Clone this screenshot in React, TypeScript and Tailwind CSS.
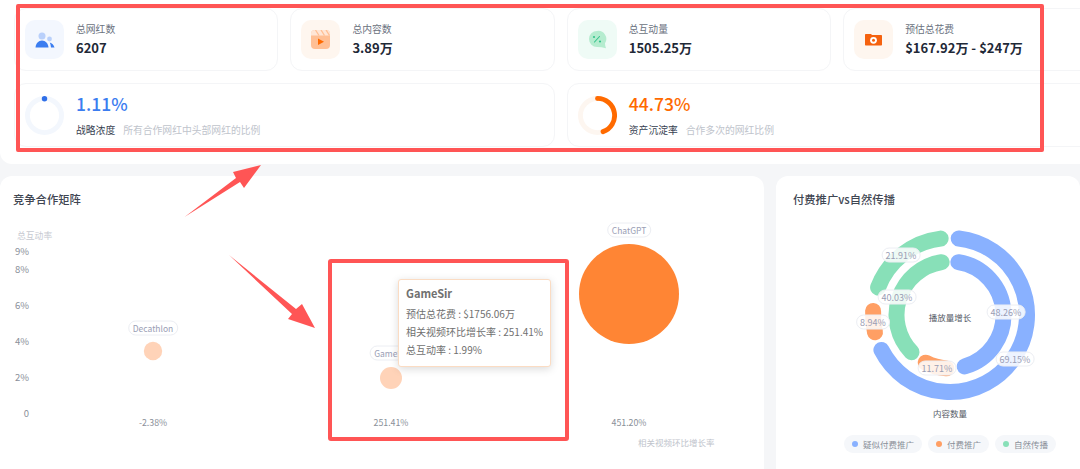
const font = { fontFamily: '"Noto Sans CJK SC", "Noto Sans", sans-serif' }

// clockwise from top, degrees
const arc = (cx: number, cy: number, r: number, from: number, to: number) => {
  const pt = (deg: number) => {
    const a = ((deg - 90) * Math.PI) / 180
    return `${(cx + r * Math.cos(a)).toFixed(2)} ${(cy + r * Math.sin(a)).toFixed(2)}`
  }
  return `M ${pt(from)} A ${r} ${r} 0 ${to - from > 180 ? 1 : 0} 1 ${pt(to)}`
}

const IconBox = ({ bg, children }: { bg: string; children: React.ReactNode }) => (
  <div className={`w-[39px] h-[39px] rounded-[10px] flex items-center justify-center shrink-0 ${bg}`}>{children}</div>
)

const StatCard = ({ icon, label, value }: { icon: React.ReactNode; label: string; value: string }) => (
  <div className="w-[264.400px] h-[63px] shrink-0 bg-white border border-[#f4f5f7] rounded-[12px] flex items-center pl-[10px] gap-[12px]">
    {icon}
    <div className="flex flex-col">
      <span className="text-[9.800px] leading-[14px] text-[#6b7280]">{label}</span>
      <span className="text-[13px] leading-[20px] mt-[2px] font-bold text-[#1f2937] whitespace-nowrap">{value}</span>
    </div>
  </div>
)

const RingCard = ({ ring, value, color, title, desc }: { ring: React.ReactNode; value: string; color: string; title: string; desc: string }) => (
  <div className="h-[64px] bg-white border border-[#f4f5f7] rounded-[12px] flex items-center pl-[10px] gap-[12px]">
    {ring}
    <div className="flex flex-col pb-[2px]">
      <span className={`text-[17.500px] leading-[24px] font-medium ${color}`}>{value}</span>
      <div className="flex items-center gap-[8px] mt-[7px] text-[9.800px] leading-[14px]">
        <span className="text-[#374151]">{title}</span>
        <span className="text-[#c0c4cc]">{desc}</span>
      </div>
    </div>
  </div>
)

const Pill = ({ className, children }: { className: string; children: React.ReactNode }) => (
  <div className={`absolute -translate-x-1/2 -translate-y-1/2 h-[15px] flex items-center rounded-full bg-white/85 border border-[#eceef3] text-[#9a9eb5] whitespace-nowrap ${className}`}>
    {children}
  </div>
)

const LegendItem = ({ dot, label }: { dot: string; label: string }) => (
  <div className="h-[18px] px-[8px] flex items-center gap-[5px] rounded-full bg-[#f5f7fa] text-[8.500px] text-[#8a8f99] whitespace-nowrap">
    <span className={`w-[6px] h-[6px] rounded-full ${dot}`} />
    {label}
  </div>
)

export default function App() {
  return (
    <div style={font} className="relative w-[1080px] h-[469px] overflow-hidden bg-[#f5f6f8]">
      {/* stats panel */}
      <div className="bg-white rounded-bl-[12px] pl-[14px] pt-[8px] pb-[17px] flex flex-col gap-[12px]">
        <div className="flex gap-[12px] w-[1093.600px]">
          <StatCard
            label="总网红数"
            value="6207"
            icon={
              <IconBox bg="bg-[#f3f7fe]">
                <svg width="20" height="16" viewBox="0 0 20 16">
                  <circle cx="7" cy="4" r="3.500" fill="#b9d0fb" />
                  <circle cx="14.500" cy="7" r="2.400" fill="#b9d0fb" />
                  <path d="M0.500 15.500C0.800 11.500 3.500 8.500 7 8.500S13.200 11.500 13.500 15.500Z" fill="#3b7df0" />
                  <path d="M14.800 10.500C17 11 18.800 13 19.500 15.500H16C15.800 13.500 15.400 12 14.800 10.500Z" fill="#3b7df0" />
                </svg>
              </IconBox>
            }
          />
          <StatCard
            label="总内容数"
            value="3.89万"
            icon={
              <IconBox bg="bg-[#fef6ef]">
                <svg width="19" height="19" viewBox="0 0 19 19">
                  <rect width="19" height="19" rx="4" fill="#ffbf94" />
                  <path d="M0 5.500V4a4 4 0 0 1 4-4h11a4 4 0 0 1 4 4v1.500Z" fill="#ffe6d6" />
                  <path d="M4.500 0 8 5.500M10 0 13.500 5.500M15 0 18.500 5.500" stroke="#ffbf94" strokeWidth="1.300" />
                  <path d="M7 8.500 13 11.800 7 15Z" fill="#ff6a00" />
                </svg>
              </IconBox>
            }
          />
          <StatCard
            label="总互动量"
            value="1505.25万"
            icon={
              <IconBox bg="bg-[#effbf6]">
                <svg width="19" height="19" viewBox="0 0 19 19">
                  <path d="M9 1a8 8 0 1 0 0 16c3 0 6 .6 9 1.200-.6-1.700-1-3.200-1-5A8 8 0 0 0 9 1Z" fill="#b5eccf" />
                  <path d="M6.500 12 11.500 6.500" stroke="#34c48b" strokeWidth="1.100" strokeLinecap="round" />
                  <circle cx="6" cy="7" r="1.100" fill="#34c48b" />
                  <circle cx="12" cy="11.500" r="1.100" fill="#34c48b" />
                </svg>
              </IconBox>
            }
          />
          <StatCard
            label="预估总花费"
            value="$167.92万 - $247万"
            icon={
              <IconBox bg="bg-[#fef6ef]">
                <svg width="17" height="12" viewBox="0 0 17 12">
                  <path d="M0 1C0 .4.400 0 1 0h5l1 1h9c.6 0 1 .4 1 1v8.500c0 .6-.4 1-1 1H1c-.6 0-1-.4-1-1Z" fill="#f5620f" />
                  <circle cx="8.500" cy="6.300" r="3.400" fill="#fff" />
                  <circle cx="8.500" cy="6.300" r="1.500" fill="#f5620f" />
                </svg>
              </IconBox>
            }
          />
        </div>
        <div className="grid grid-cols-2 gap-[12px] w-[1093.600px]">
          <RingCard
            value="1.11%"
            color="text-[#3b7df0]"
            title="战略浓度"
            desc="所有合作网红中头部网红的比例"
            ring={
              <svg width="39" height="39" viewBox="0 0 40 40" className="shrink-0">
                <circle cx="20" cy="20" r="17.500" fill="none" stroke="#f3f7fd" strokeWidth="5" />
                <circle cx="20" cy="2.800" r="2.800" fill="#2f6fe8" />
              </svg>
            }
          />
          <RingCard
            value="44.73%"
            color="text-[#ff6a00]"
            title="资产沉淀率"
            desc="合作多次的网红比例"
            ring={
              <svg width="39" height="39" viewBox="0 0 40 40" className="shrink-0">
                <circle cx="20" cy="20" r="17.500" fill="none" stroke="#fdf6f0" strokeWidth="5" />
                <path d={arc(20, 20, 17.5, 0, 161)} fill="none" stroke="#ff6a00" strokeWidth="5" strokeLinecap="round" />
              </svg>
            }
          />
        </div>
      </div>

      <div className="flex gap-[12px] mt-[12px]">
        {/* competition matrix */}
        <div className="w-[764px] h-[293px] shrink-0 bg-white rounded-t-[12px] flex flex-col">
          <h2 className="pl-[13px] pt-[14px] text-[11.300px] leading-[18px] font-medium text-[#3f4652]">竞争合作矩阵</h2>
          <div className="relative flex-1">
            <svg width="764" height="261" className="absolute left-0 top-0">
              <circle cx="153" cy="143" r="9.200" fill="#ffd3b8" />
              <circle cx="391" cy="170" r="11" fill="#ffd3b8" />
              <circle cx="629" cy="86" r="50" fill="#ff8534" />
            </svg>
            <span className="absolute left-[17px] top-[21px] text-[8.800px] leading-[14px] text-[#c6c9d1]">总互动率</span>
            {[
              ['9%', 'top-[37px]'],
              ['8%', 'top-[55px]'],
              ['6%', 'top-[91px]'],
              ['4%', 'top-[127px]'],
              ['2%', 'top-[163px]'],
              ['0', 'top-[199px]'],
            ].map(([t, pos]) => (
              <span key={t} className={`absolute left-0 w-[29px] text-right text-[9.500px] leading-[12px] text-[#8a8f99] ${pos}`}>{t}</span>
            ))}
            <span className="absolute left-[153px] top-[209px] -translate-x-1/2 text-[8.800px] leading-[12px] text-[#8a8f99]">-2.38%</span>
            <span className="absolute left-[391px] top-[209px] -translate-x-1/2 text-[8.800px] leading-[12px] text-[#8a8f99]">251.41%</span>
            <span className="absolute left-[629px] top-[209px] -translate-x-1/2 text-[8.800px] leading-[12px] text-[#8a8f99]">451.20%</span>
            <span className="absolute left-[638px] top-[227px] text-[8.500px] leading-[14px] text-[#c0c4cc] whitespace-nowrap">相关视频环比增长率</span>
            <Pill className="left-[153px] top-[120px] px-[3.500px] text-[8.500px]">Decathlon</Pill>
            <Pill className="left-[391px] top-[145px] px-[3.500px] text-[8.500px]">GameSir</Pill>
            <Pill className="left-[629px] top-[22px] px-[3.500px] text-[8.500px]">ChatGPT</Pill>
            <div className="absolute left-[398px] top-[71px] w-[153px] h-[88px] bg-white border border-[#fbdcc3] rounded-[3px] shadow-[0_2px_8px_rgba(0,0,0,0.15)] pl-[7px] pt-[5px] text-[#707070]">
              <p className="text-[11px] leading-[16px] font-bold mb-[4px]">GameSir</p>
              <p className="text-[10px] leading-[18px] whitespace-nowrap">预估总花费 : $1756.06万</p>
              <p className="text-[10px] leading-[18px] whitespace-nowrap">相关视频环比增长率 : 251.41%</p>
              <p className="text-[10px] leading-[18px] whitespace-nowrap">总互动率 : 1.99%</p>
            </div>
          </div>
        </div>

        {/* paid vs organic */}
        <div className="flex-1 h-[293px] bg-white rounded-t-[12px] flex flex-col">
          <h2 className="pl-[17px] pt-[14px] text-[11.300px] leading-[18px] font-medium text-[#3f4652]">付费推广vs自然传播</h2>
          <div className="relative h-[227px]">
            <svg width="304" height="227" className="absolute left-0 top-0" fill="none" strokeWidth="16" strokeLinecap="round">
              <path d={arc(174, 107, 77, 6.5, 243)} stroke="#89b1ff" />
              <path d={arc(174, 107, 77, 257, 273)} stroke="#ff9f64" />
              <path d={arc(174, 107, 77, 291, 353)} stroke="#88e0b8" />
              <path d={arc(174, 107, 53.5, 9, 164)} stroke="#89b1ff" />
              <path d={arc(174, 107, 53.5, 184, 207)} stroke="#ff9f64" />
              <path d={arc(174, 107, 53.5, 226, 351)} stroke="#88e0b8" />
            </svg>
            <Pill className="left-[125px] top-[47px] px-[3px] text-[9px]">21.91%</Pill>
            <Pill className="left-[121px] top-[89px] px-[3px] text-[9px]">40.03%</Pill>
            <Pill className="left-[97px] top-[114px] px-[3px] text-[9px]">8.94%</Pill>
            <Pill className="left-[161px] top-[160px] px-[3px] text-[9px]">11.71%</Pill>
            <Pill className="left-[230px] top-[104px] px-[3px] text-[9px]">48.26%</Pill>
            <Pill className="left-[239px] top-[151px] px-[3px] text-[9px]">69.15%</Pill>
            <span className="absolute left-[174px] top-[102px] -translate-x-1/2 text-[8.500px] leading-[14px] text-[#555b66] whitespace-nowrap">播放量增长</span>
            <span className="absolute left-[174px] top-[198px] -translate-x-1/2 text-[8.500px] leading-[14px] text-[#555b66] whitespace-nowrap">内容数量</span>
          </div>
          <div className="flex gap-[6px] pl-[68px]">
            <LegendItem dot="bg-[#89b1ff]" label="疑似付费推广" />
            <LegendItem dot="bg-[#ff9f64]" label="付费推广" />
            <LegendItem dot="bg-[#88e0b8]" label="自然传播" />
          </div>
        </div>
      </div>

      {/* annotations drawn over the screenshot */}
      <div className="absolute left-[16px] top-[4px] w-[1028px] h-[148px] border-[4px] border-[#ff5555] rounded-[2px]" />
      <div className="absolute left-[328px] top-[259px] w-[241px] h-[182px] border-[4px] border-[#ff5555] rounded-[3px]" />
      <svg width="1080" height="469" className="absolute left-0 top-0 pointer-events-none">
        <polygon points="184.500,217 236,178 233,172 261,165 244,188 240,182" fill="#ff5555" />
        <polygon points="229,255 296,309 302,304 315,328 288,319 292,314" fill="#ff5555" />
      </svg>
    </div>
  )
}
